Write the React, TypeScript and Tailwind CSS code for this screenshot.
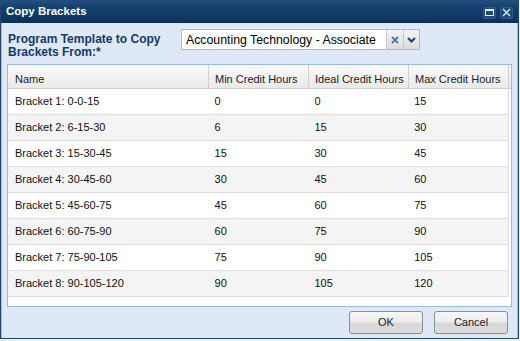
import React from "react";

const rows = [
  ["Bracket 1: 0-0-15", "0", "0", "15"],
  ["Bracket 2: 6-15-30", "6", "15", "30"],
  ["Bracket 3: 15-30-45", "15", "30", "45"],
  ["Bracket 4: 30-45-60", "30", "45", "60"],
  ["Bracket 5: 45-60-75", "45", "60", "75"],
  ["Bracket 6: 60-75-90", "60", "75", "90"],
  ["Bracket 7: 75-90-105", "75", "90", "105"],
  ["Bracket 8: 90-105-120", "90", "105", "120"],
];

function Btn({ label }: { label: string }) {
  return (
    <div className="w-[74px] h-[23px] rounded-[3px] border border-[#8e8e8e] bg-[linear-gradient(#f7f7f7_0%,#ededed_48%,#d8d8d8_52%,#dcdcdc_100%)] flex items-center justify-center text-[11px] text-[#222]">
      {label}
    </div>
  );
}

export default function App() {
  return (
    <div className="w-[520px] h-[341px] bg-[#f0f0f0] font-['Liberation_Sans',Arial,sans-serif]">
      <div className="w-[519px] h-[339px] flex flex-col border-x border-b border-[#24456c] bg-[#dfe8f6]">
        {/* title bar */}
        <div className="h-[23px] shrink-0 flex items-center justify-between pl-[5px] pr-[5px] bg-[linear-gradient(#24507f_0%,#143f6c_35%,#0f3762_80%,#0b2e54_100%)]">
          <span className="text-white font-bold text-[11.5px] pt-[1px]">Copy Brackets</span>
          <div className="flex gap-[4px] items-center mt-[2px]">
            <div className="w-[13px] h-[12px] rounded-[2px] bg-[#1e4a79] border border-[#2d5a8a] flex items-center justify-center">
              <svg width="9" height="7" viewBox="0 0 9 7">
                <rect x="0.5" y="0.5" width="8" height="6" fill="none" stroke="#e6eef7" strokeWidth="1" />
                <rect x="0.5" y="0.5" width="8" height="1.5" fill="#e6eef7" />
              </svg>
            </div>
            <div className="w-[13px] h-[12px] rounded-[2px] bg-[#1e4a79] border border-[#2d5a8a] flex items-center justify-center">
              <svg width="9" height="9" viewBox="0 0 9 9">
                <path d="M1 1 L8 8 M8 1 L1 8" stroke="#e6eef7" strokeWidth="1.3" />
              </svg>
            </div>
          </div>
        </div>

        {/* body */}
        <div className="flex-1 flex flex-col px-[5px] border-x border-[#a9bdd6]">
          <div className="h-[41px] shrink-0 flex pt-[6px]">
            <div className="w-[174px] pl-[1px] pt-[4px] text-[12px] leading-[13px] font-bold text-[#15396b]">
              Program Template to Copy
              <br />
              Brackets From:*
            </div>
            <div className="w-[239px] h-[21px] flex border border-[#b5b8c8] bg-white">
              <div className="flex-1 pl-[4px] pt-[2px] text-[12.3px] leading-[17px] text-black whitespace-nowrap overflow-hidden">
                Accounting Technology - Associate
              </div>
              <div className="w-[17px] h-full border-l border-[#c4c8d2] bg-[linear-gradient(#f4f4f4,#dcdcdc)] flex items-center justify-center">
                <svg width="8" height="8" viewBox="0 0 8 8">
                  <path d="M1 1 L7 7 M7 1 L1 7" stroke="#4a78b4" strokeWidth="1.8" />
                </svg>
              </div>
              <div className="w-[16px] h-full border-l border-[#c4c8d2] bg-[linear-gradient(#f4f4f4,#dcdcdc)] flex items-center justify-center">
                <svg width="9" height="6" viewBox="0 0 9 6">
                  <path d="M1 1 L4.5 4.5 L8 1" stroke="#1b3d6c" strokeWidth="2" fill="none" />
                </svg>
              </div>
            </div>
          </div>

          {/* grid */}
          <div className="h-[243px] shrink-0 border border-[#99bbe8] bg-white flex flex-col">
            <div className="h-[24px] shrink-0 flex border-b border-[#d0d0d0] bg-[linear-gradient(#fafafa,#e9e9e9)] text-[11px] text-[#222]">
              <div className="w-[201px] pl-[7px] pt-[8px] leading-[13px] border-r border-[#d0d0d0]">Name</div>
              <div className="w-[100px] pl-[6px] pt-[8px] leading-[13px] border-r border-[#d0d0d0]">Min Credit Hours</div>
              <div className="w-[100px] pl-[6px] pt-[8px] leading-[13px] border-r border-[#d0d0d0]">Ideal Credit Hours</div>
              <div className="w-[100px] pl-[6px] pt-[8px] leading-[13px] border-r border-[#d0d0d0]">Max Credit Hours</div>
            </div>
            {rows.map((r, i) => (
              <div
                key={i}
                className={`w-[501px] h-[26px] shrink-0 flex border-b border-r border-[#dedede] text-[11px] leading-[24px] text-[#111] ${i % 2 === 1 ? "bg-[#f4f4f4]" : "bg-white"}`}
              >
                <div className="w-[201px] pl-[7px]">{r[0]}</div>
                <div className="w-[100px] pl-[6px]">{r[1]}</div>
                <div className="w-[100px] pl-[6px]">{r[2]}</div>
                <div className="w-[100px] pl-[6px]">{r[3]}</div>
              </div>
            ))}
          </div>

          {/* footer */}
          <div className="flex justify-end gap-[11px] pt-[4px] pr-[4px]">
            <Btn label="OK" />
            <Btn label="Cancel" />
          </div>
        </div>
      </div>
    </div>
  );
}
